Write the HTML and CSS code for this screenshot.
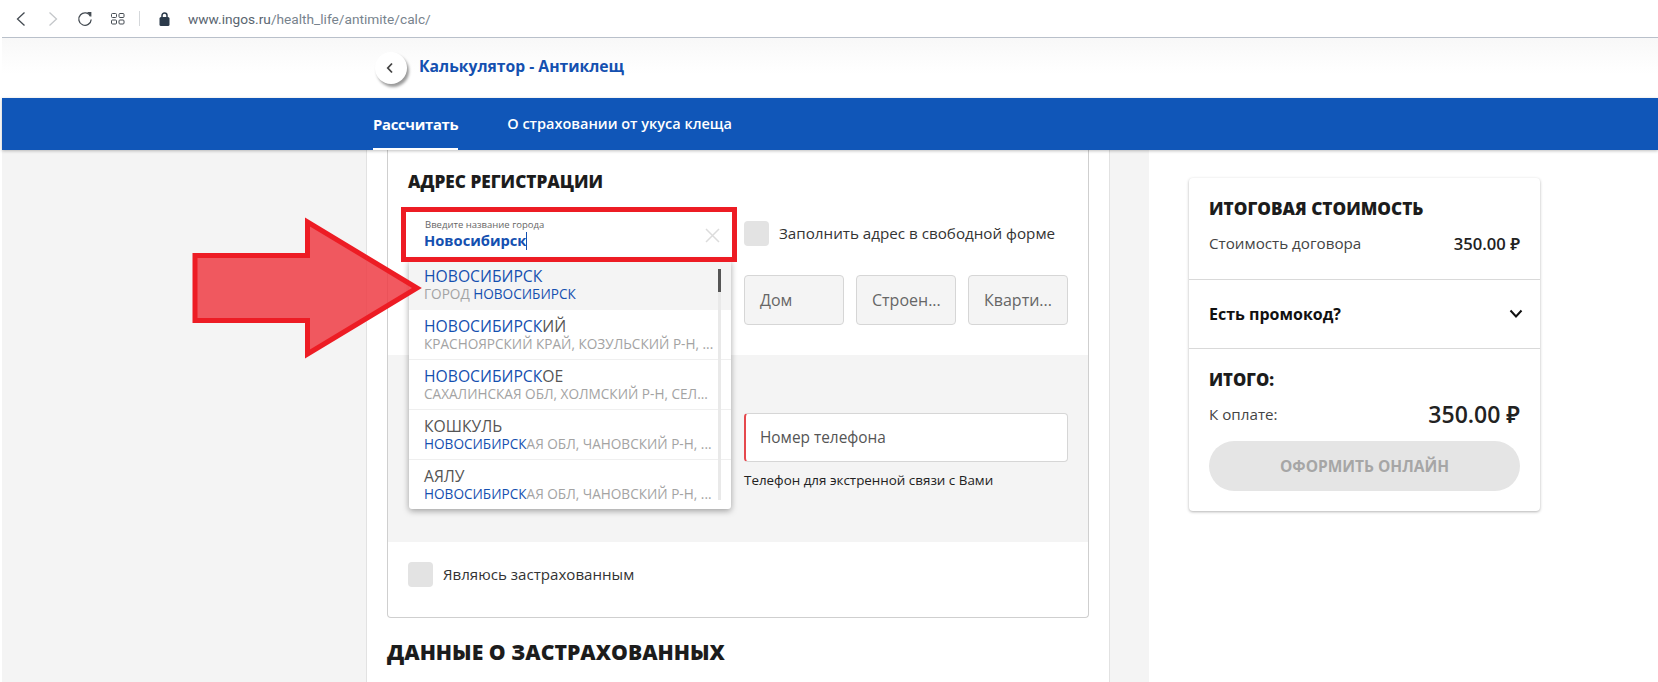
FILE: index.html
```html
<!DOCTYPE html>
<html lang="ru">
<head>
    <meta charset="UTF-8">
    <meta name="viewport" content="width=device-width, initial-scale=1.0">
    <title>Калькулятор - Антиклещ</title>
    <link rel="stylesheet" href="styles.css">
</head>
<body>
    <div class="browser-bar">
        <svg class="tool-icon" width="12" height="18" viewBox="0 0 12 18"><path d="M9.5 2.500 L2.500 9 L9.500 15.500" fill="none" stroke="#444b52" stroke-width="1.300"/></svg>
        <svg class="tool-icon forward" width="12" height="18" viewBox="0 0 12 18"><path d="M2.500 2.500 L9.500 9 L2.500 15.500" fill="none" stroke="#c4c7ca" stroke-width="1.300"/></svg>
        <svg class="tool-icon reload" width="16" height="16" viewBox="0 0 16 16"><path d="M13.600 5.400 A6.200 6.200 0 1 0 14.200 8.500" fill="none" stroke="#444b52" stroke-width="1.300"/><path d="M10 1 L14.400 1 L14.400 5.700 Z" fill="#444b52"/></svg>
        <svg class="tool-icon apps" width="14" height="12" viewBox="0 0 14 12"><g fill="none" stroke="#444b52" stroke-width="1"><rect x="0.500" y="0.500" width="5" height="4" rx="1"/><rect x="8" y="0.500" width="5" height="4" rx="1"/><rect x="0.500" y="7" width="5" height="4" rx="1"/><rect x="8" y="7" width="5" height="4" rx="1"/></g></svg>
        <span class="tool-sep"></span>
        <svg class="tool-icon lock" width="11" height="14" viewBox="0 0 11 14"><path d="M3 6 V3.500 A2.500 2.500 0 0 1 8 3.500 V6" fill="none" stroke="#2b3a4a" stroke-width="1.500"/><rect x="0.500" y="5" width="10" height="9" rx="1.500" fill="#2b3a4a"/></svg>
        <span class="url"><b>www.ingos.ru</b>/health_life/antimite/calc/</span>
    </div>

    <div class="page">
        <header class="top">
            <a class="back-btn">
                <svg width="10" height="12" viewBox="0 0 10 12"><path d="M6 1.500 L1.800 6 L6 10.500" fill="none" stroke="#444" stroke-width="1.800"/></svg>
            </a>
            <span class="top-title">Калькулятор - Антиклещ</span>
        </header>

        <nav class="tabs">
            <a class="tab active">Рассчитать</a>
            <a class="tab">О страховании от укуса клеща</a>
        </nav>

        <div class="columns">
            <div class="side-left"></div>

            <main class="main">
                <section class="form-card">
                    <h2 class="card-title">АДРЕС РЕГИСТРАЦИИ</h2>
                    <div class="form-row">
                        <div class="city-field">
                            <div class="city-input">
                                <span class="city-label">Введите название города</span>
                                <span class="city-value">Новосибирск<i class="caret"></i></span>
                                <svg class="clear" width="15" height="15" viewBox="0 0 15 15"><path d="M1 1 L14 14 M14 1 L1 14" stroke="#dcdcdc" stroke-width="1.500"/></svg>
                            </div>
                            <div class="red-frame"></div>
                            <div class="suggest">
                                <div class="suggest-item current">
                                    <div class="s-title"><em>НОВОСИБИРСК</em></div>
                                    <div class="s-sub">ГОРОД <em>НОВОСИБИРСК</em></div>
                                </div>
                                <div class="suggest-item">
                                    <div class="s-title"><em>НОВОСИБИРСК</em>ИЙ</div>
                                    <div class="s-sub">КРАСНОЯРСКИЙ КРАЙ, КОЗУЛЬСКИЙ Р-Н, ...</div>
                                </div>
                                <div class="suggest-item">
                                    <div class="s-title"><em>НОВОСИБИРСК</em>ОЕ</div>
                                    <div class="s-sub">САХАЛИНСКАЯ ОБЛ, ХОЛМСКИЙ Р-Н, СЕЛ...</div>
                                </div>
                                <div class="suggest-item">
                                    <div class="s-title">КОШКУЛЬ</div>
                                    <div class="s-sub"><em>НОВОСИБИРСК</em>АЯ ОБЛ, ЧАНОВСКИЙ Р-Н, ...</div>
                                </div>
                                <div class="suggest-item">
                                    <div class="s-title">АЯЛУ</div>
                                    <div class="s-sub"><em>НОВОСИБИРСК</em>АЯ ОБЛ, ЧАНОВСКИЙ Р-Н, ...</div>
                                </div>
                                <div class="scroll-track"><div class="scroll-thumb"></div></div>
                            </div>
                        </div>
                        <label class="check free-form">
                            <span class="check-box"></span>
                            <span class="check-text">Заполнить адрес в свободной форме</span>
                        </label>
                    </div>
                    <div class="form-row second">
                        <div></div>
                        <div class="house-fields">
                            <div class="small-field">Дом</div>
                            <div class="small-field">Строен...</div>
                            <div class="small-field">Кварти...</div>
                        </div>
                    </div>
                    <div class="contact-block">
                        <div></div>
                        <div>
                            <div class="phone-field">Номер телефона</div>
                            <p class="hint">Телефон для экстренной связи с Вами</p>
                        </div>
                    </div>
                    <label class="check insured">
                        <span class="check-box"></span>
                        <span class="check-text">Являюсь застрахованным</span>
                    </label>
                </section>
                <h2 class="section-title">ДАННЫЕ О ЗАСТРАХОВАННЫХ</h2>
            </main>

            <div class="side-gap"></div>

            <aside class="summary">
                <div class="sum-block first">
                    <h3>ИТОГОВАЯ СТОИМОСТЬ</h3>
                    <div class="sum-line">
                        <span>Стоимость договора</span>
                        <strong>350.00 ₽</strong>
                    </div>
                </div>
                <div class="sum-block promo">
                    <span>Есть промокод?</span>
                    <svg width="14" height="10" viewBox="0 0 14 10"><path d="M1.500 1.500 L7 7.500 L12.500 1.500" fill="none" stroke="#111" stroke-width="2"/></svg>
                </div>
                <div class="sum-block total">
                    <h3>ИТОГО:</h3>
                    <div class="sum-line">
                        <span>К оплате:</span>
                        <strong class="big">350.00 ₽</strong>
                    </div>
                    <button class="pay-btn" type="button">ОФОРМИТЬ ОНЛАЙН</button>
                </div>
            </aside>
        </div>
    </div>

    <svg class="big-arrow" width="240" height="146" viewBox="0 0 240 146">
        <path d="M5 39.500 H117.500 V6 L227 72 L117.500 138 V104.500 H5 Z" fill="rgba(239,60,68,0.85)" stroke="#ed1c24" stroke-width="5"/>
    </svg>
</body>
</html>
```

FILE: styles.css
```css
html, body {
    margin: 0;
    padding: 0;
}
body {
    width: 1658px;
    height: 682px;
    overflow: hidden;
    position: relative;
    background: #fff;
    font-family: 'Open Sans', 'Noto Sans', sans-serif;
    color: #222;
}

/* browser toolbar */
.browser-bar {
    height: 37px;
    margin-left: 2px;
    border-bottom: 1px solid #b9c0ca;
    display: flex;
    align-items: center;
    padding-left: 13px;
}
.tool-icon {
    flex: none;
}
.forward {
    margin-left: 20px;
}
.reload {
    margin-left: 18px;
}
.apps {
    margin-left: 18px;
}
.tool-sep {
    width: 1px;
    height: 15px;
    background: #d5d8db;
    margin-left: 14px;
}
.lock {
    margin-left: 19px;
}
.url {
    margin-left: 18px;
    font-family: Roboto, sans-serif;
    font-size: 13.7px;
    color: #78838d;
}
.url b {
    font-weight: 400;
    color: #5a6570;
}

.page {
    margin-left: 2px;
}

/* white header */
.top {
    height: 60px;
    box-sizing: border-box;
    padding: 14px 0 0 373px;
    display: flex;
    align-items: flex-start;
    background: linear-gradient(#f8f8f8, #fff 60%);
}
.back-btn {
    width: 32px;
    height: 32px;
    border-radius: 50%;
    background: #fff;
    box-shadow: 2px 3px 3px rgba(0,0,0,0.4);
    display: flex;
    align-items: center;
    justify-content: center;
}
.top-title {
    margin-left: 12px;
    font-size: 15.7px;
    font-weight: 700;
    line-height: 28px;
    color: #1450b0;
}

/* blue nav */
.tabs {
    height: 52px;
    background: #1056b8;
    box-shadow: 0 1px 3px rgba(0,0,0,0.25);
    display: flex;
    gap: 49px;
    padding-left: 371px;
    position: relative;
}
.tab {
    font-size: 14.5px;
    font-weight: 600;
    line-height: 52px;
    color: #fff;
}
.tab.active {
    font-size: 14.8px;
    font-weight: 700;
    letter-spacing: -0.3px;
    border-bottom: 2px solid #fff;
    height: 50px;
}

.columns {
    display: flex;
    height: 532px;
}
.side-left {
    width: 364px;
    background: #f4f4f4;
}
.main {
    width: 702px;
    padding: 0 20px;
    border-left: 1px solid #e2e2e2;
    border-right: 1px solid #e2e2e2;
    background: #fff;
}
.side-gap {
    width: 39px;
    background: #f4f4f4;
}

/* form card */
.form-card {
    width: 700px;
    box-sizing: content-box;
    border: 1px solid #cfcfcf;
    border-top: 0;
    border-radius: 0 0 4px 4px;
}
.card-title {
    margin: 0;
    padding: 22px 20px 20px;
    font-size: 17.2px;
    line-height: 20px;
    font-weight: 800;
    color: #1c1c1c;
}
.form-row {
    display: grid;
    grid-template-columns: 323px 324px;
    column-gap: 13px;
    padding: 0 20px;
}
.form-row.second {
    margin-top: 18px;
    margin-bottom: 30px;
}
.city-field {
    position: relative;
    height: 45px;
}
.city-input {
    height: 45px;
    box-sizing: border-box;
    padding: 7px 0 0 16px;
    background: #fff;
    position: relative;
}
.city-label {
    display: block;
    font-size: 9.5px;
    line-height: 12px;
    padding-left: 1px;
    color: #666;
}
.city-value {
    display: block;
    font-size: 14.7px;
    font-weight: 700;
    line-height: 19px;
    color: #1450b0;
}
.caret {
    display: inline-block;
    width: 1px;
    height: 18px;
    background: #1450b0;
    vertical-align: -4px;
}
.clear {
    position: absolute;
    right: 11px;
    top: 16px;
}
.red-frame {
    position: absolute;
    left: -7px;
    top: -5px;
    width: 326px;
    height: 45px;
    border: 5px solid #ed1c24;
    z-index: 3;
}

/* dropdown */
.suggest {
    position: absolute;
    left: 1px;
    top: 48px;
    width: 322px;
    height: 249px;
    overflow: hidden;
    background: #fff;
    border-radius: 0 0 3px 3px;
    box-shadow: 0 2px 6px rgba(0,0,0,0.35);
    z-index: 2;
}
.suggest-item {
    height: 50px;
    box-sizing: border-box;
    padding: 7px 0 0 15px;
    border-bottom: 1px solid #efefef;
    white-space: nowrap;
}
.suggest-item.current {
    background: #f4f4f4;
    border-bottom: 0;
}
.s-title {
    font-size: 15.7px;
    line-height: 18px;
    color: #555;
}
.s-sub {
    font-size: 13.6px;
    line-height: 17px;
    color: #a3a3a3;
}
.suggest em {
    font-style: normal;
    color: #1450b0;
}
.scroll-track {
    position: absolute;
    left: 309px;
    top: 9px;
    width: 3px;
    height: 231px;
    background: #e9e9e9;
}
.scroll-thumb {
    height: 23px;
    background: #555;
}

/* checkboxes */
.check {
    display: flex;
    align-items: center;
    gap: 10px;
    font-size: 15.2px;
    color: #333;
}
.check-box {
    width: 25px;
    height: 25px;
    flex: none;
    border-radius: 4px;
    background: #e3e3e3;
}
.free-form {
    margin-bottom: 2px;
}
.check-text {
    padding-bottom: 2px;
}
.check.insured {
    padding: 20px 20px 30px;
    font-size: 15.1px;
}

/* house number fields */
.house-fields {
    display: flex;
    gap: 12px;
}
.small-field {
    width: 100px;
    height: 50px;
    box-sizing: border-box;
    padding-left: 15px;
    border: 1px solid #d6d6d6;
    border-radius: 4px;
    background: #f4f4f4;
    font-size: 16px;
    line-height: 48px;
    color: #666;
}

/* grey block with phone */
.contact-block {
    display: grid;
    grid-template-columns: 323px 324px;
    column-gap: 13px;
    height: 187px;
    box-sizing: border-box;
    padding: 58px 20px 0;
    background: #f4f4f4;
}
.phone-field {
    height: 49px;
    box-sizing: border-box;
    padding-left: 14px;
    background: #fff;
    border: 1px solid #d6d6d6;
    border-left: 2px solid #e5484d;
    border-radius: 4px;
    font-size: 15.4px;
    line-height: 48px;
    color: #555;
}
.hint {
    margin: 9px 0 0;
    font-size: 13.4px;
    line-height: 18px;
    color: #222;
}

.section-title {
    margin: 24px 0 0;
    font-size: 21.2px;
    line-height: 20px;
    font-weight: 800;
    color: #1c1c1c;
}

/* summary card on the right */
.summary {
    width: 351px;
    height: 333px;
    margin: 28px 0 0 40px;
    background: #fff;
    border-radius: 4px;
    box-shadow: 0 1px 3px rgba(0,0,0,0.3);
}
.sum-block {
    padding: 0 20px;
    box-sizing: border-box;
}
.sum-block h3 {
    margin: 0;
    font-size: 16.7px;
    line-height: 20px;
    font-weight: 800;
    color: #1c1c1c;
}
.sum-block.first h3 {
    font-size: 17.2px;
}
.sum-block.first {
    height: 102px;
    padding-top: 21px;
    border-bottom: 1px solid #d9d9d9;
}
.sum-line {
    display: flex;
    justify-content: space-between;
    align-items: center;
    margin-top: 13px;
    height: 22px;
    font-size: 15.2px;
    color: #444;
}
.sum-line strong {
    font-weight: 600;
    font-size: 16.6px;
    color: #222;
}
.sum-line strong.big {
    font-size: 23px;
    font-weight: 600;
}
.sum-block.promo {
    height: 69px;
    border-bottom: 1px solid #d9d9d9;
    display: flex;
    justify-content: space-between;
    align-items: center;
    font-size: 16px;
    font-weight: 700;
    color: #111;
}
.promo svg {
    margin-right: -3px;
}
.sum-block.total {
    padding-top: 21px;
}
.pay-btn {
    display: block;
    width: 311px;
    height: 50px;
    margin-top: 16px;
    border: none;
    border-radius: 25px;
    background: #e5e5e5;
    color: #a6a6a6;
    font-family: inherit;
    font-size: 15.5px;
    font-weight: 700;
}

.big-arrow {
    position: absolute;
    left: 190px;
    top: 216px;
    z-index: 5;
}
```
